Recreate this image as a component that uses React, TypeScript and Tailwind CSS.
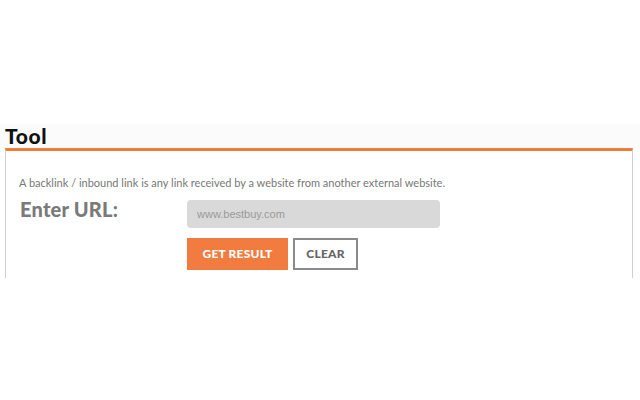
export default function App() {
  return (
    <div className="w-[640px] h-[400px] bg-white font-['Lato',sans-serif]">
      <div className="h-[124px]" />
      <div className="h-[24px] bg-[#fbfbfb] px-[5px]">
        <h2 className="text-[21px] font-black leading-[24px] tracking-[0.6px] text-[#111]">Tool</h2>
      </div>
      <div className="ml-[5px] mr-[7px] h-[130px] overflow-hidden border-t-[3px] border-x border-t-[#f07a3a] border-x-[#cfcfcf] px-[13px] pt-[25px]">
        <p className="text-[11px] leading-[14px] text-[#777]">
          A backlink / inbound link is any link received by a website from another external website.
        </p>
        <div className="mt-[10px] flex items-start">
          <label className="w-[168px] pl-px text-[20px] font-black leading-[18px] tracking-[0.2px] text-[#7a7a7a]">Enter URL:</label>
          <input
            type="text"
            placeholder="www.bestbuy.com"
            className="h-[28px] w-[253px] rounded-[4px] bg-[#d9d9d9] px-[10px] font-['Liberation_Sans',sans-serif] text-[11px] text-[#666] placeholder:text-[#9a9a9a] outline-none"
          />
        </div>
        <div className="mt-[10px] flex gap-[5px] pl-[168px]">
          <button className="h-[32px] w-[101px] bg-[#f27b3f] text-[12px] font-black tracking-[0.2px] text-white">GET RESULT</button>
          <button className="h-[32px] w-[65px] border-2 border-[#8a8a8a] text-[12px] font-black tracking-[0.2px] text-[#666]">CLEAR</button>
        </div>
      </div>
    </div>
  );
}
